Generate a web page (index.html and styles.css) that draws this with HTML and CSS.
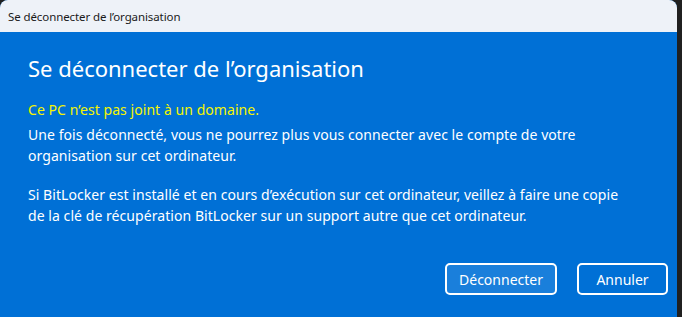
FILE: index.html
```html
<!DOCTYPE html>
<html lang="fr">
<head>
  <meta charset="UTF-8" />
  <title>Se déconnecter de l’organisation</title>
  <link rel="stylesheet" href="styles.css">
</head>
<body>
  <div class="window">
    <div class="titlebar">Se déconnecter de l’organisation</div>

    <main class="content">
      <h1>Se déconnecter de l’organisation</h1>
      <p class="warning">Ce PC n’est pas joint à un domaine.</p>
      <p>Une fois déconnecté, vous ne pourrez plus vous connecter avec le compte de votre<br>organisation sur cet ordinateur.</p>
      <p class="gap">Si BitLocker est installé et en cours d’exécution sur cet ordinateur, veillez à faire une copie<br>de la clé de récupération BitLocker sur un support autre que cet ordinateur.</p>

      <div class="actions">
        <button class="primary">Déconnecter</button>
        <button>Annuler</button>
      </div>
    </main>
  </div>
</body>
</html>
```

FILE: styles.css
```css
* { margin: 0; padding: 0; box-sizing: border-box; }

html, body {
  height: 100%;
  background-color: #202020;
  font-family: 'Noto Sans', 'Open Sans', sans-serif;
  overflow: hidden;
}

.window {
  width: 677px;
  height: 100%;
  display: flex;
  flex-direction: column;
  border-radius: 8px 8px 0 0;
  overflow: hidden;
  background-color: #0070d6;
}

.titlebar {
  height: 32px;
  flex-shrink: 0;
  background-color: #eef2f8;
  color: #1a1a1a;
  font-size: 11.5px;
  letter-spacing: -0.1px;
  padding: 9px 0 0 8px;
}

.content {
  flex: 1;
  display: flex;
  flex-direction: column;
  padding: 20px 9px 22px 28px;
  color: #ffffff;
}

.content h1 {
  font-weight: 400;
  font-size: 22px;
  line-height: 32px;
  margin-bottom: 15px;
}

.content p {
  font-size: 14px;
  line-height: 21px;
  letter-spacing: 0.06px;
}

.content p.warning {
  color: #f5f500;
  margin-bottom: 4px;
}

.content p.gap {
  margin-top: 18px;
}

.actions {
  margin-top: auto;
  display: flex;
  justify-content: flex-end;
  gap: 20px;
}

.actions button {
  font-family: inherit;
  font-size: 14px;
  color: #ffffff;
  background-color: transparent;
  border: 2px solid #ffffff;
  border-radius: 5px;
  height: 32px;
  width: 91px;
}

.actions button.primary {
  width: 112px;
  background-color: #1a7fdb;
}
```
